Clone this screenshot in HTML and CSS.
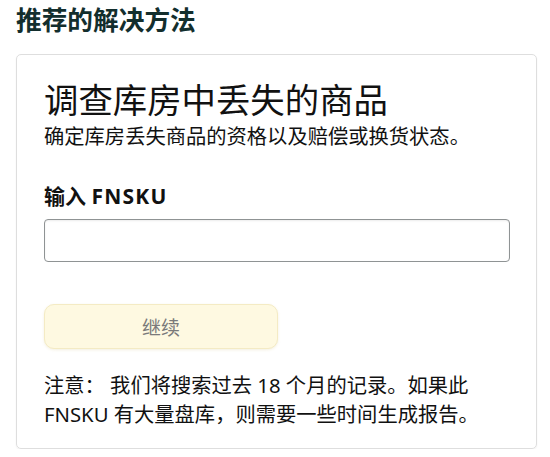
FILE: index.html
```html
<!DOCTYPE html>
<html lang="zh-CN">
<head>
<meta charset="utf-8">
<title>推荐的解决方法</title>
<link rel="stylesheet" href="styles.css">
</head>
<body>
<div class="page">
  <h2 class="section-title">推荐的解决方法</h2>
  <div class="card">
    <h1 class="card-title">调查库房中丢失的商品</h1>
    <p class="card-sub">确定库房丢失商品的资格以及赔偿或换货状态。</p>
    <label class="field-label" for="fnsku">输入 <span class="latin">FNSKU</span></label>
    <input class="field-input" id="fnsku" type="text">
    <button class="btn-continue" type="button">继续</button>
    <p class="note">注意： 我们将搜索过去 18 个月的记录。如果此<br>FNSKU 有大量盘库，则需要一些时间生成报告。</p>
  </div>
</div>
</body>
</html>
```
FILE: styles.css
```css
html, body {
  margin: 0;
  padding: 0;
  background: #ffffff;
}
body {
  font-family: "Noto Sans", "Noto Sans CJK SC", sans-serif;
  color: #111111;
}
.page {
  padding: 0 13px 0 16px;
}
.section-title {
  margin: 0;
  font-size: 25.7px;
  line-height: 37px;
  font-weight: 700;
  color: #132e2d;
  font-family: "Noto Sans CJK SC", sans-serif;
}
.card {
  margin-top: 17px;
  border: 1px solid #dedede;
  border-radius: 5px;
  box-shadow: 0 1px 2px rgba(0,0,0,0.06);
  padding: 23px 27px 19px 27px;
  display: flex;
  flex-direction: column;
  align-items: flex-start;
}
.card-title {
  margin: 0 0 3px 0;
  font-size: 34.4px;
  line-height: 40px;
  font-weight: 400;
  font-family: "Noto Sans CJK SC", sans-serif;
  color: #111111;
}
.card-sub {
  margin: 0;
  font-size: 20.3px;
  line-height: 28px;
  font-family: "Noto Sans CJK SC", sans-serif;
  color: #111111;
}
.field-label {
  margin-top: 33px;
  font-size: 21px;
  line-height: 28px;
  font-weight: 700;
  color: #111111;
}
.latin {
  letter-spacing: 1.2px;
}
.field-input {
  margin-top: 9px;
  box-sizing: border-box;
  width: 466px;
  height: 43px;
  border: 1px solid #8f9394;
  border-radius: 4px;
  box-shadow: inset 0 1px 2px rgba(0,0,0,0.08);
  background: #ffffff;
  padding: 0 10px;
  font-size: 18px;
  outline: none;
}
.btn-continue {
  margin-top: 42px;
  box-sizing: border-box;
  width: 234px;
  height: 45px;
  border: 1px solid #f4ebc4;
  border-radius: 10px;
  background: #fef9e1;
  box-shadow: 0 1px 3px rgba(200,180,100,0.2);
  color: #7a7a7a;
  font-family: "Noto Sans CJK SC", sans-serif;
  font-size: 19px;
  padding: 0;
}
.note {
  margin: 22px 0 0 0;
  font-size: 20.3px;
  line-height: 29px;
  color: #111111;
}
```
